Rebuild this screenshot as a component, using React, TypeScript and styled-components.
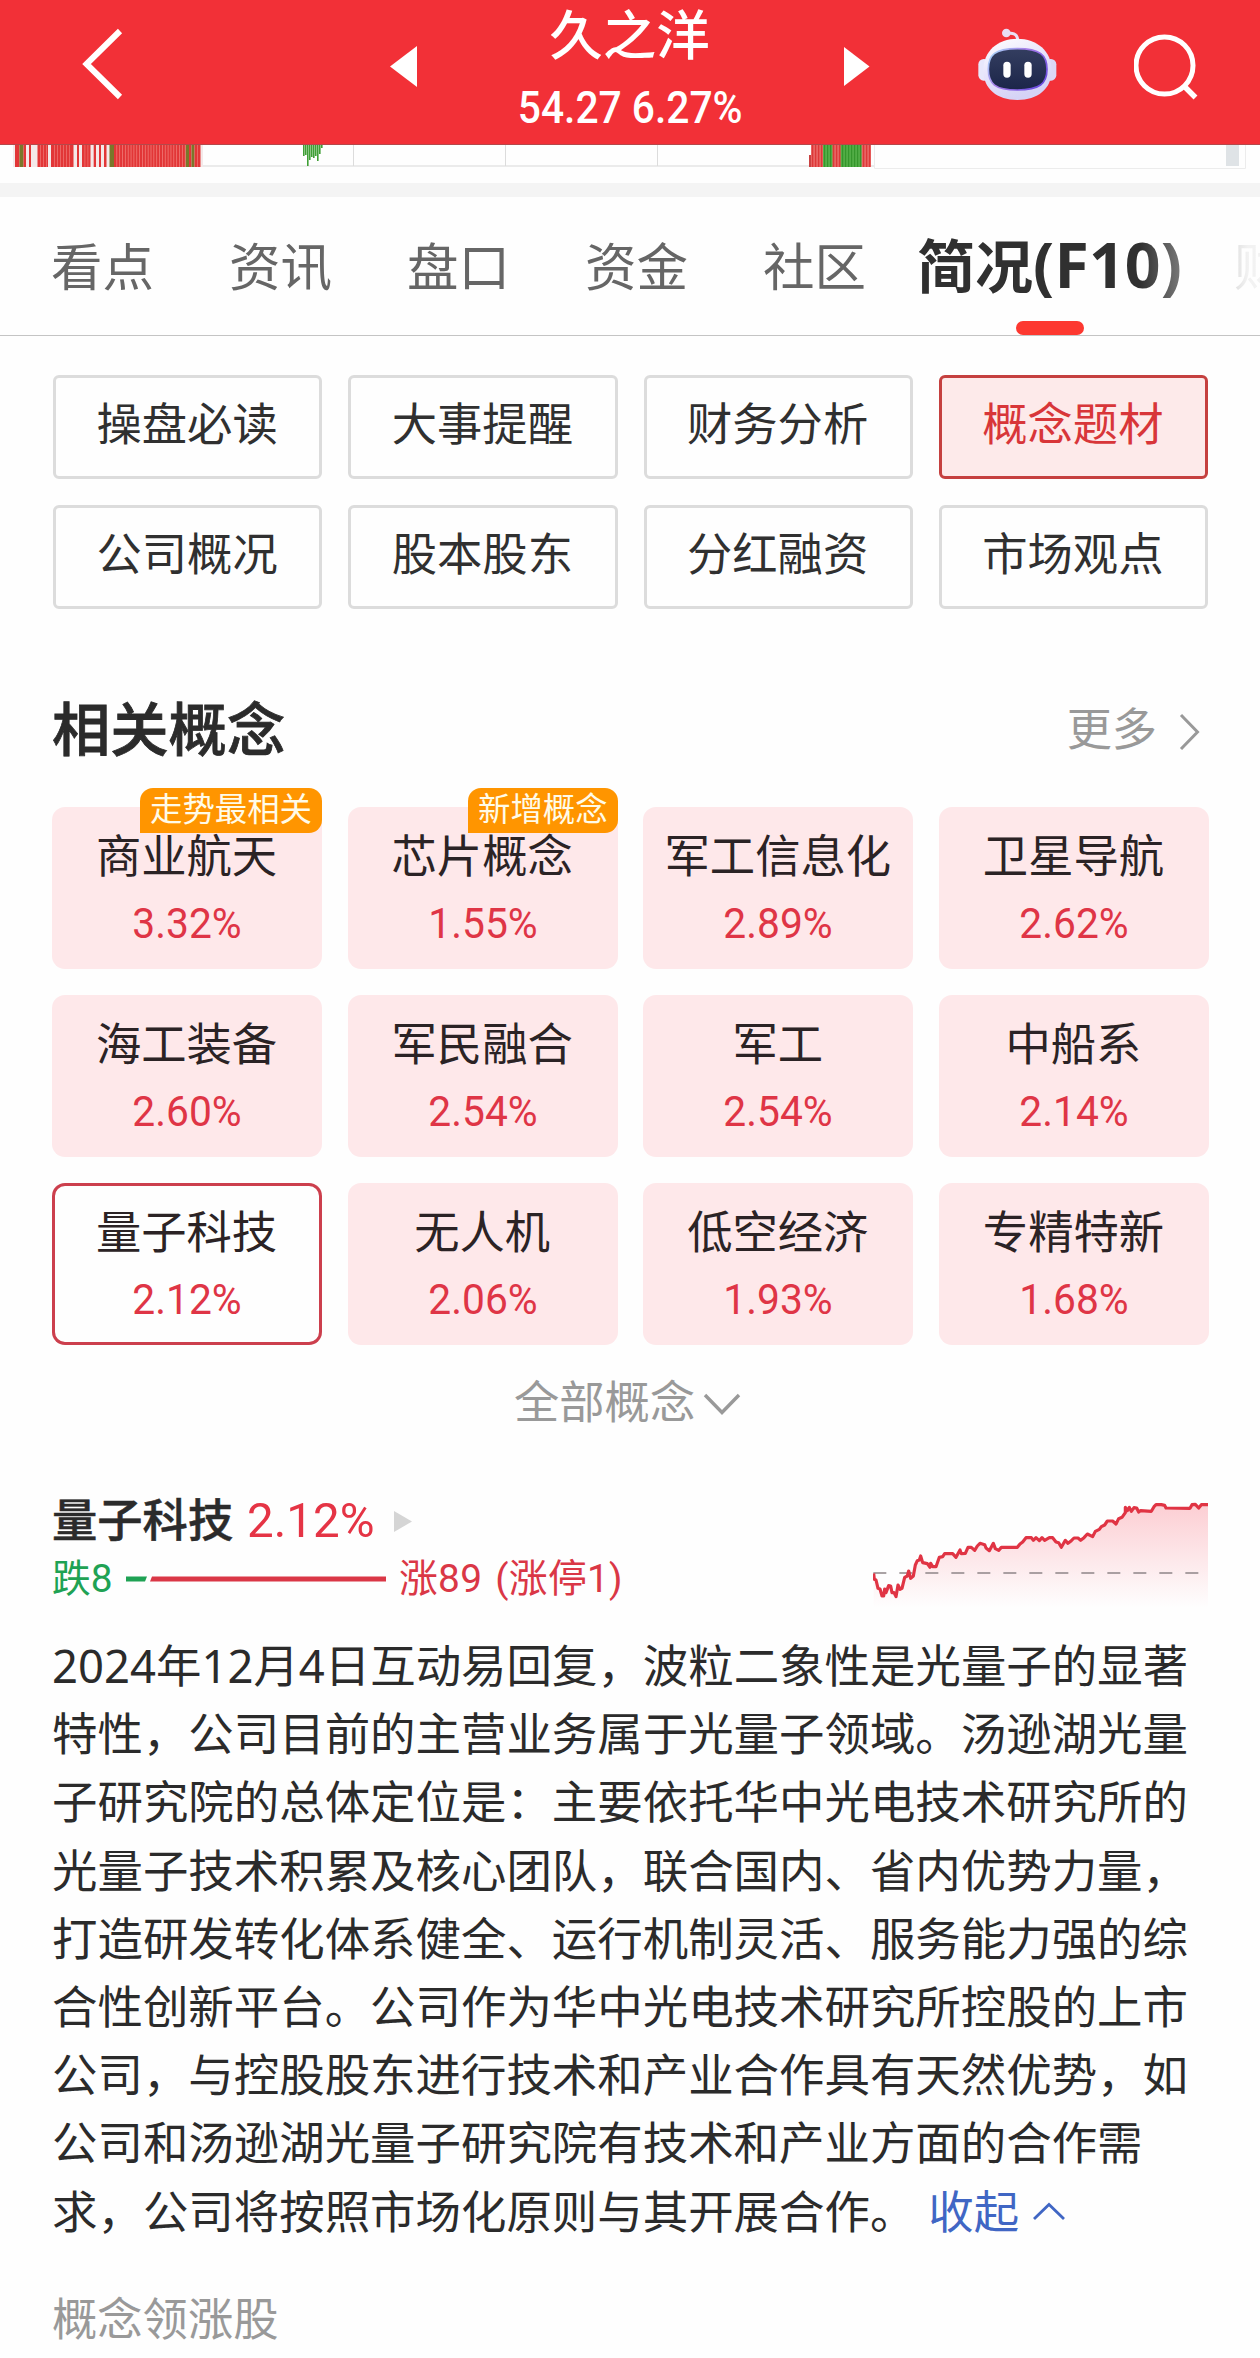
import React from 'react';
import styled, { createGlobalStyle } from 'styled-components';

const CJK = '"Noto Sans", "Noto Sans CJK SC", sans-serif';
const NUM = 'Roboto, "Noto Sans CJK SC", sans-serif';

const GlobalStyle = createGlobalStyle`
  * { box-sizing: border-box; }
  body { margin: 0; background: #fefefe; }
`;

const Page = styled.main`
  width: 1260px;
  height: 2358px;
  overflow: hidden;
  background: #fefefe;
  color: #2b2b2b;
  font-family: ${CJK};
  display: flex;
  flex-direction: column;
`;

const Header = styled.header`
  height: 145px;
  flex: none;
  background: #f23037;
  border-bottom: 1px solid #b5484a;
  display: grid;
  grid-template-columns: 390px 28px 426px 26px 107px 80px 77px 126px;
  color: #fff;
`;

const BackCell = styled.div`
  padding: 28px 0 0 80px;
`;

const IconCell = styled.div<{ $top: number }>`
  padding-top: ${(p) => p.$top}px;
  line-height: 0;
`;

const TitleBlock = styled.div`
  display: flex;
  flex-direction: column;
  align-items: center;
`;

const StockName = styled.div`
  margin: 5px 3px 0 0;
  height: 60px;
  line-height: 60px;
  font-size: 53.5px;
  font-weight: 500;
`;

const StockQuote = styled.div`
  margin: 12px 2px 0 0;
  height: 62px;
  line-height: 62px;
  font-size: 45px;
  font-weight: 500;
  font-family: ${NUM};
  white-space: nowrap;
  transform: scaleX(0.905);
`;

const ChartStrip = styled.div`
  height: 38px;
  flex: none;
  line-height: 0;
`;

const Divider = styled.div`
  height: 14px;
  flex: none;
  background: #f4f4f4;
`;

const TabBar = styled.nav`
  position: relative;
  height: 139px;
  flex: none;
  display: flex;
  padding-left: 51px;
  overflow: hidden;
  border-bottom: 1px solid #c4c4c4;
`;

const Tab = styled.div<{ $width: number }>`
  width: ${(p) => p.$width}px;
  flex: none;
  height: 138px;
  line-height: 138px;
  font-size: 51.5px;
  color: #666;
  white-space: nowrap;
`;

const ActiveTab = styled.div`
  width: 317px;
  flex: none;
  display: flex;
  flex-direction: column;
`;

const ActiveLabel = styled.div`
  height: 124px;
  line-height: 138px;
  font-size: 58px;
  font-weight: 700;
  color: #303030;
  white-space: nowrap;
`;

const ActiveCode = styled.span`
  font-size: 62.5px;
  line-height: 1;
  letter-spacing: 0.2px;
`;

const Indicator = styled.div`
  margin-left: 99px;
  width: 68px;
  height: 14px;
  border-radius: 7px;
  background: #fd3830;
`;

const TabFade = styled.div`
  position: absolute;
  right: 0;
  top: 0;
  width: 120px;
  height: 130px;
  background: linear-gradient(90deg, rgba(254, 254, 254, 0), rgba(254, 254, 254, 0.92) 90%);
`;

const MenuGrid = styled.section`
  margin: 39px 52px 0 53px;
  flex: none;
  display: grid;
  grid-template-columns: repeat(4, 1fr);
  gap: 26px;
`;

const MenuButton = styled.div<{ $active?: boolean }>`
  height: 104px;
  border: 3px solid ${(p) => (p.$active ? '#c5403f' : '#dcdcdc')};
  border-radius: 6px;
  background: ${(p) => (p.$active ? '#fdeaea' : '#fefefe')};
  color: ${(p) => (p.$active ? '#d83639' : '#303030')};
  font-size: 45.3px;
  line-height: 91px;
  text-align: center;
  white-space: nowrap;
  padding-right: 1px;
`;

const SectionHead = styled.div`
  margin: 79px 60px 0 53px;
  height: 82px;
  flex: none;
  display: flex;
  align-items: center;
  justify-content: space-between;
`;

const SectionTitle = styled.h2`
  margin: -6px 0 0 -1px;
  font-size: 58.3px;
  line-height: 82px;
  font-weight: 500;
  font-family: "Noto Sans CJK SC", sans-serif;
  -webkit-text-stroke: 0.8px currentColor;
`;

const More = styled.div`
  display: flex;
  align-items: center;
  gap: 22px;
  font-size: 45.2px;
  line-height: 82px;
  color: #999;
`;

const MoreChevron = styled.svg`
  display: block;
  margin-top: 5px;
`;

const ConceptGrid = styled.section`
  margin: 37px 51px 0 52px;
  flex: none;
  display: grid;
  grid-template-columns: repeat(4, 270px);
  justify-content: space-between;
  row-gap: 26px;
`;

const Card = styled.div<{ $selected?: boolean }>`
  position: relative;
  height: 162px;
  padding-top: 18px;
  border-radius: 13px;
  background: ${(p) => (p.$selected ? '#fefefe' : '#fee8ea')};
  box-shadow: ${(p) => (p.$selected ? 'inset 0 0 0 3px #cc3f4d' : 'none')};
  text-align: center;
  white-space: nowrap;
`;

const CardName = styled.div`
  height: 62px;
  line-height: 62px;
  font-size: 45.3px;
  color: #2b2325;
  padding-right: 1px;
`;

const CardPct = styled.div`
  height: 70px;
  line-height: 74px;
  font-family: ${NUM};
  font-size: 41.8px;
  color: #df3546;
  transform: scaleX(0.975);
`;

const Badge = styled.div`
  position: absolute;
  right: 0;
  top: -19px;
  height: 45px;
  padding: 0 10px;
  border-radius: 13px 13px 13px 0;
  background: #ff9500;
  color: #fffbe8;
  font-size: 32.4px;
  line-height: 41px;
`;

const ShowAll = styled.div`
  margin-top: 20px;
  padding-left: 514px;
  height: 74px;
  flex: none;
  display: flex;
  align-items: center;
  gap: 8px;
  font-size: 45.3px;
  line-height: 74px;
  color: #999;
`;

const ShowAllChevron = styled.svg`
  display: block;
  margin-top: 4px;
`;

const Summary = styled.section`
  margin: 51px 51px 0 53px;
  height: 132px;
  flex: none;
  display: flex;
  justify-content: space-between;
`;

const SummaryInfo = styled.div`
  display: flex;
  flex-direction: column;
`;

const SummaryTop = styled.div`
  height: 62px;
  display: flex;
  align-items: center;
`;

const SummaryName = styled.div`
  margin: -9px 0 0 -1px;
  width: 195px;
  font-size: 45.3px;
  line-height: 62px;
  font-weight: 500;
  font-family: "Noto Sans CJK SC", sans-serif;
  -webkit-text-stroke: 0.5px currentColor;
`;

const SummaryPct = styled.div`
  width: 147px;
  font-family: ${NUM};
  font-size: 49px;
  line-height: 62px;
  color: #e53445;
  transform: scaleX(0.97);
  transform-origin: left;
`;

const SummaryCounts = styled.div`
  height: 54px;
  display: flex;
  align-items: center;
  font-family: ${NUM};
  font-size: 38.8px;
  line-height: 54px;
  white-space: nowrap;
`;

const Fall = styled.span`
  margin-left: -1px;
  width: 74px;
  color: #1fa254;
`;

const Rise = styled.span`
  margin-left: 12px;
  color: #da3746;
  letter-spacing: 0.3px;
  word-spacing: 3px;
`;

const Ratio = styled.svg`
  display: block;
`;

const Spark = styled.svg`
  display: block;
  margin-top: 8px;
`;

const Article = styled.section`
  margin: 9px 0 0 52px;
  flex: none;
  font-size: 45.45px;
  line-height: 68.2px;
`;

const Line = styled.div`
  height: 68.2px;
  white-space: nowrap;
  display: flex;
  align-items: center;
`;

const Collapse = styled.span`
  margin-left: 13px;
  display: inline-flex;
  align-items: center;
  gap: 13px;
  color: #4066c4;
`;

const Leaders = styled.div`
  margin: 40px 0 0 52px;
  flex: none;
  font-size: 45.3px;
  line-height: 68px;
  color: #999;
`;

const tabs = ['看点', '资讯', '盘口', '资金', '社区'];

const menu = ['操盘必读', '大事提醒', '财务分析', '概念题材', '公司概况', '股本股东', '分红融资', '市场观点'];

const concepts: { name: string; pct: string; badge?: string }[] = [
  { name: '商业航天', pct: '3.32%', badge: '走势最相关' },
  { name: '芯片概念', pct: '1.55%', badge: '新增概念' },
  { name: '军工信息化', pct: '2.89%' },
  { name: '卫星导航', pct: '2.62%' },
  { name: '海工装备', pct: '2.60%' },
  { name: '军民融合', pct: '2.54%' },
  { name: '军工', pct: '2.54%' },
  { name: '中船系', pct: '2.14%' },
  { name: '量子科技', pct: '2.12%' },
  { name: '无人机', pct: '2.06%' },
  { name: '低空经济', pct: '1.93%' },
  { name: '专精特新', pct: '1.68%' },
];

const lines = [
  '2024年12月4日互动易回复，波粒二象性是光量子的显著',
  '特性，公司目前的主营业务属于光量子领域。汤逊湖光量',
  '子研究院的总体定位是：主要依托华中光电技术研究所的',
  '光量子技术积累及核心团队，联合国内、省内优势力量，',
  '打造研发转化体系健全、运行机制灵活、服务能力强的综',
  '合性创新平台。公司作为华中光电技术研究所控股的上市',
  '公司，与控股股东进行技术和产业合作具有天然优势，如',
  '公司和汤逊湖光量子研究院有技术和产业方面的合作需',
];

const sparkPoints =
  '103,310 105,328 110,330 116,355 122,357 128,378 133,378 136,357 140,368 148,347 154,348 158,368 164,368 170,380 176,345 182,358 188,355 196,322 204,318 208,303 214,325 222,318 228,285 234,272 240,270 244,258 250,278 264,281 272,292 274,280 280,290 290,290 300,262 310,260 316,251 340,251 350,262 362,240 366,251 378,250 386,232 396,232 406,241 414,228 422,220 436,224 440,234 450,242 462,220 468,236 478,241 486,232 534,232 542,222 550,216 560,203 576,203 582,211 590,203 600,212 608,203 616,211 630,203 640,203 650,216 658,218 666,232 678,211 686,220 696,212 704,204 716,204 724,211 734,203 744,192 760,200 768,184 780,178 786,170 796,165 804,153 820,153 830,162 838,146 848,142 858,128 858,112 864,122 870,112 876,124 884,113 892,114 898,126 904,122 936,124 944,110 950,104 966,104 976,106 980,114 1052,115 1058,104 1068,103 1078,114 1086,104 1106,104';

/* Volume bars: [start, end, colour] spans along the bottom of the K-line chart. */
const spans: [number, number, string][] = [
  [15, 19.5, 'r'], [19.5, 23.5, 'g'], [23.5, 26, 'r'], [29, 31, 'r'],
  [37.5, 48, 'r'], [51, 73.5, 'r'], [77, 79, 'r'], [82, 90.5, 'r'],
  [93.7, 96, 'r'], [99, 101, 'r'], [104, 106.5, 'r'], [109.5, 114, 'g'],
  [114, 185.5, 'r'], [185.5, 189, 'g'], [189, 191.5, 'r'], [191.5, 194.5, 'g'], [194.5, 200.5, 'r'],
];

const drops = [11, 10, 21, 15, 12, 13, 11, 16, 9, 3];

function VolumeStrip() {
  return (
    <svg width="1260" height="38" viewBox="0 145 1260 38">
      <path d="M200 166H874" stroke="#ebebeb" strokeWidth="2" />
      <path d="M353.5 145V166M505.5 145V166M657.5 145V166" stroke="#dcdcdc" strokeWidth="1" />
      <path d="M874.5 145V168.5H1245.5V145" fill="none" stroke="#ececec" strokeWidth="1" />
      <rect x="1226" y="145" width="13" height="21" fill="#dfe3e6" />
      <rect x="13" y="145" width="190" height="22" fill="#f4e9e9" />
      {spans.map(([a, b, c]) => (
        <rect key={a} x={a} y="145" width={b - a} height="22" fill={c === 'r' ? '#e23637' : '#79782a'} />
      ))}
      {Array.from({ length: 25 }, (_, i) => (
        <rect key={i} x={116.4 + i * 2.85} y="145" width="0.8" height="22" fill="#f07a76" />
      ))}
      {[40, 43, 46, 54, 57, 60, 63, 66, 69, 84.5, 87.5, 197].map((x) => (
        <rect key={x} x={x} y="145" width="0.8" height="22" fill="#ee716e" />
      ))}
      {drops.map((h, i) => (
        <rect key={i} x={303 + i * 2} y="145" width="1.6" height={h} fill="#3f9f35" />
      ))}
      <rect x="811" y="145" width="60" height="22" fill="#f28f8c" />
      <rect x="823" y="145" width="10" height="22" fill="#76c968" />
      <rect x="840" y="145" width="21" height="22" fill="#6fc461" />
      <rect x="809" y="155" width="2" height="12" fill="#c94242" />
      {Array.from({ length: 20 }, (_, i) => {
        const x = 811.5 + i * 3;
        const green = (x >= 822 && x < 832) || (x >= 839 && x < 861);
        return <rect key={i} x={x} y="145" width="2.1" height="22" fill={green ? '#35962c' : '#dd3838'} />;
      })}
    </svg>
  );
}

function Robot() {
  return (
    <svg width="80" height="74" viewBox="50 20 240 222">
      <defs>
        <linearGradient id="shell" x1="0" y1="0" x2="0.4" y2="1">
          <stop offset="0" stopColor="#ffffff" />
          <stop offset="0.55" stopColor="#e6e2fb" />
          <stop offset="1" stopColor="#d5d3f6" />
        </linearGradient>
        <linearGradient id="rim" x1="0" y1="0" x2="1" y2="0.6">
          <stop offset="0" stopColor="#a8e2fa" />
          <stop offset="0.5" stopColor="#a67be8" />
          <stop offset="1" stopColor="#6f50df" />
        </linearGradient>
        <linearGradient id="visor" x1="0" y1="0" x2="0" y2="1">
          <stop offset="0" stopColor="#343e60" />
          <stop offset="1" stopColor="#1b2549" />
        </linearGradient>
      </defs>
      <path d="M136 42C154 34 172 40 172 60" fill="none" stroke="#eadff3" strokeWidth="9" />
      <circle cx="138" cy="38" r="13" fill="#e9dcf3" />
      <rect x="54" y="116" width="34" height="65" rx="16" fill="#e8e7fb" />
      <rect x="254" y="116" width="34" height="65" rx="16" fill="#dcd8f6" />
      <path d="M171 55C230 55 274 92 274 150C274 206 232 239 171 239C110 239 69 206 69 150C69 92 112 55 171 55Z" fill="url(#shell)" />
      <path d="M171 85C240 85 260 104 260 147C260 190 238 209 171 209C104 209 84 190 84 147C84 104 102 85 171 85Z" fill="url(#visor)" stroke="url(#rim)" strokeWidth="5" />
      <rect x="129" y="124" width="22" height="48" rx="11" fill="#fff" />
      <rect x="192" y="124" width="22" height="48" rx="11" fill="#fff" />
    </svg>
  );
}

export default function App() {
  return (
    <Page>
      <GlobalStyle />
      <Header>
        <BackCell>
          <svg width="44" height="72" viewBox="0 0 44 72">
            <path d="M40 3L6.5 36L40 69" fill="none" stroke="#fff" strokeWidth="6" />
          </svg>
        </BackCell>
        <IconCell $top={46}>
          <svg width="28" height="41"><path d="M0 20.5L27 0V41Z" fill="#fff" /></svg>
        </IconCell>
        <TitleBlock>
          <StockName>久之洋</StockName>
          <StockQuote>54.27 6.27%</StockQuote>
        </TitleBlock>
        <IconCell $top={47}>
          <svg width="26" height="39"><path d="M0 0V39L25.5 19.5Z" fill="#fff" /></svg>
        </IconCell>
        <span />
        <IconCell $top={27}><Robot /></IconCell>
        <span />
        <IconCell $top={32}>
          <svg width="70" height="70" viewBox="0 0 70 70">
            <circle cx="30.5" cy="33.5" r="28.5" fill="none" stroke="#fff" strokeWidth="5" />
            <path d="M49.5 53.5L61.5 65.5" stroke="#fff" strokeWidth="5.4" />
          </svg>
        </IconCell>
      </Header>
      <ChartStrip><VolumeStrip /></ChartStrip>
      <Divider />
      <TabBar>
        {tabs.map((t, i) => (
          <Tab key={t} $width={i === 4 ? 154 : 178}>{t}</Tab>
        ))}
        <ActiveTab>
          <ActiveLabel>简况<ActiveCode>(F10)</ActiveCode></ActiveLabel>
          <Indicator />
        </ActiveTab>
        <Tab $width={102}>财务</Tab>
        <TabFade />
      </TabBar>
      <MenuGrid>
        {menu.map((m) => (
          <MenuButton key={m} $active={m === '概念题材'}>{m}</MenuButton>
        ))}
      </MenuGrid>
      <SectionHead>
        <SectionTitle>相关概念</SectionTitle>
        <More>
          更多
          <MoreChevron width="21" height="38"><path d="M2 2L18.5 19L2 36" fill="none" stroke="#999" strokeWidth="3" /></MoreChevron>
        </More>
      </SectionHead>
      <ConceptGrid>
        {concepts.map((c) => (
          <Card key={c.name} $selected={c.name === '量子科技'}>
            {c.badge && <Badge>{c.badge}</Badge>}
            <CardName>{c.name}</CardName>
            <CardPct>{c.pct}</CardPct>
          </Card>
        ))}
      </ConceptGrid>
      <ShowAll>
        全部概念
        <ShowAllChevron width="38" height="24"><path d="M2 3L19 20.5L36 3" fill="none" stroke="#999" strokeWidth="3.4" /></ShowAllChevron>
      </ShowAll>
      <Summary>
        <SummaryInfo>
          <SummaryTop>
            <SummaryName>量子科技</SummaryName>
            <SummaryPct>2.12%</SummaryPct>
            <svg width="19" height="21"><path d="M0 0L18 10.5L0 21Z" fill="#d5d5d5" /></svg>
          </SummaryTop>
          <SummaryCounts>
            <Fall>跌8</Fall>
            <Ratio width="261" height="6">
              <path d="M0 0.5H21L19 5.5H0Z" fill="#1fa254" />
              <path d="M26 0.5H260V5.5H24Z" fill="#da3746" />
            </Ratio>
            <Rise>涨89 (涨停1)</Rise>
          </SummaryCounts>
        </SummaryInfo>
        <Spark width="336" height="112" viewBox="101 84 1008 336">
          <defs>
            <linearGradient id="area" x1="0" y1="0" x2="0" y2="1">
              <stop offset="0" stopColor="#fcced3" />
              <stop offset="1" stopColor="#fefefe" />
            </linearGradient>
          </defs>
          <polygon points={`${sparkPoints} 1106,412 103,412`} fill="url(#area)" />
          <path d="M102 309H1106" stroke="#8f8588" strokeWidth="4" strokeDasharray="39 39" />
          <polyline points={sparkPoints} fill="none" stroke="#e03444" strokeWidth="9.5" strokeLinejoin="round" />
        </Spark>
      </Summary>
      <Article>
        {lines.map((l) => (
          <Line key={l}>{l}</Line>
        ))}
        <Line>
          求，公司将按照市场化原则与其开展合作。
          <Collapse>
            收起
            <svg width="34" height="20"><path d="M2 18L17 3.5L32 18" fill="none" stroke="#4066c4" strokeWidth="2.8" /></svg>
          </Collapse>
        </Line>
      </Article>
      <Leaders>概念领涨股</Leaders>
    </Page>
  );
}
